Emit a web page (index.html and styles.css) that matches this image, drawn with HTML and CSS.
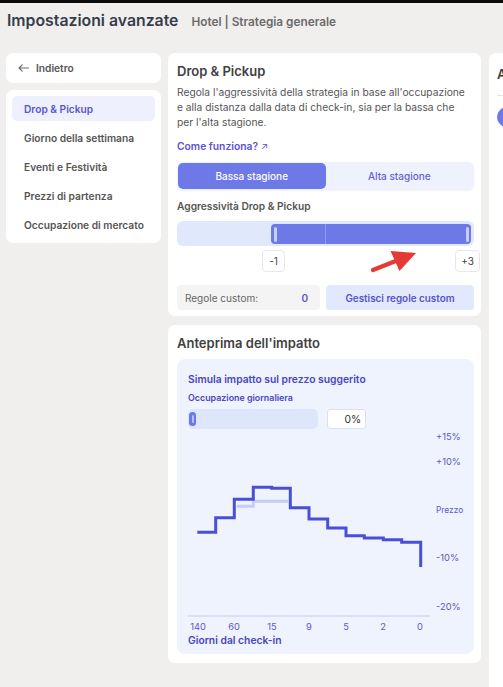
FILE: index.html
```html
<!DOCTYPE html>
<html lang="it">
<head>
<meta charset="utf-8">
<title>Impostazioni avanzate</title>
<link rel="stylesheet" href="styles.css">
</head>
<body>
<div class="topbar"></div>
<header class="page-header">
  <h1 class="page-title">Impostazioni avanzate</h1>
  <span class="page-sub">Hotel | Strategia generale</span>
</header>
<div class="layout">
  <aside class="side">
    <a class="card back">
      <svg class="back-icon" width="11" height="8" viewBox="0 0 11 8"><path d="M10.5 4H1M4.2 0.8L1 4l3.2 3.2" fill="none" stroke="#6b6b6b" stroke-width="1.1" stroke-linecap="round" stroke-linejoin="round"/></svg>
      <span>Indietro</span>
    </a>
    <nav class="card menu">
      <a class="menu-item active">Drop &amp; Pickup</a>
      <a class="menu-item">Giorno della settimana</a>
      <a class="menu-item">Eventi e Festività</a>
      <a class="menu-item">Prezzi di partenza</a>
      <a class="menu-item">Occupazione di mercato</a>
    </nav>
  </aside>

  <main class="main">
    <section class="card strategy">
      <h2 class="card-title">Drop &amp; Pickup</h2>
      <p class="desc">Regola l'aggressività della strategia in base all'occupazione e alla distanza dalla data di check-in, sia per la bassa che per l'alta stagione.</p>
      <a class="how">Come funziona? <span class="how-arrow">↗</span></a>
      <div class="seg">
        <button class="seg-btn active">Bassa stagione</button>
        <button class="seg-btn">Alta stagione</button>
      </div>
      <div class="field-label">Aggressività Drop &amp; Pickup</div>
      <div class="range">
        <div class="range-fill" style="margin-left:31.4%">
          <span class="handle"></span>
          <span class="tick" style="margin-left:48px"></span>
          <span class="handle handle-end"></span>
        </div>
      </div>
      <div class="range-values">
        <span class="val-box val-min">-1</span>
        <span class="val-box val-max">+3</span>
      </div>
      <div class="custom-row">
        <div class="custom-count"><span>Regole custom:</span><span class="count-num">0</span></div>
        <button class="manage-btn">Gestisci regole custom</button>
      </div>
      <svg class="red-arrow" width="52" height="28" viewBox="0 0 52 28">
        <path d="M5 22 L29 12.5" stroke="#e53935" stroke-width="4.4" stroke-linecap="round"/>
        <path d="M48 5 L22.5 3 L31.5 23 Z" fill="#e53935"/>
      </svg>
    </section>

    <section class="card impact">
      <h2 class="card-title">Anteprima dell'impatto</h2>
      <div class="sim">
        <div class="sim-title">Simula impatto sul prezzo suggerito</div>
        <div class="occ-label">Occupazione giornaliera</div>
        <div class="occ-row">
          <div class="occ-track"><span class="occ-thumb"><span class="occ-thumb-in"></span></span></div>
          <div class="occ-input">0%</div>
        </div>
        <svg class="chart" width="286" height="202" viewBox="0 0 286 202">
          <g class="ylab">
            <text x="248" y="9">+15%</text>
            <text x="248" y="34">+10%</text>
            <text x="248" y="82" class="prezzo">Prezzo</text>
            <text x="248" y="130">-10%</text>
            <text x="248" y="179">-20%</text>
          </g>
          <polyline points="48.7,75.3 65.3,75.3 65.3,70.3 100.3,70.3" fill="none" stroke="#c6cef6" stroke-width="3"/>
          <polyline points="9.3,101.3 27.7,101.3 27.7,86.7 46.3,86.7 46.3,68.3 65.3,68.3 65.3,56.3 83.7,56.3 83.7,57.3 102.3,57.3 102.3,76.7 121,76.7 121,88 139.7,88 139.7,97 158,97 158,104.7 176.3,104.7 176.3,107 195.3,107 195.3,108.7 213.7,108.7 213.7,111.3 232.7,111.3 232.7,136" fill="none" stroke="#4b4fd6" stroke-width="3"/>
          <line x1="0" y1="185" x2="242" y2="185" stroke="#c4ccf0" stroke-width="1"/>
          <g class="xlab">
            <text x="10" y="199">140</text>
            <text x="46" y="199">60</text>
            <text x="84" y="199">15</text>
            <text x="121" y="199">9</text>
            <text x="158" y="199">5</text>
            <text x="195" y="199">2</text>
            <text x="232" y="199">0</text>
          </g>
        </svg>
        <div class="axis-title">Giorni dal check-in</div>
      </div>
    </section>
  </main>

  <aside class="card extra">
    <h2 class="card-title extra-title">A</h2>
    <div class="extra-rule"></div>
    <span class="extra-dot"></span>
  </aside>
</div>
</body>
</html>
```

FILE: styles.css
```css
* { box-sizing: border-box; margin: 0; padding: 0; }
html, body { width: 503px; height: 687px; overflow: hidden; }
body {
  background: #f0efed;
  font-family: Inter, "Noto Sans", sans-serif;
  color: #555;
}
button { font-family: inherit; border: 0; cursor: pointer; }
a { text-decoration: none; cursor: pointer; }

.topbar { height: 3px; background: #0b0b0b; }

.page-header {
  height: 50px;
  padding: 8px 7px 0;
  display: flex;
  align-items: baseline;
  gap: 13px;
}
.page-title { font-size: 15.8px; line-height: 20px; font-weight: 600; color: #363d4a; }
.page-sub { font-size: 11.8px; font-weight: 600; color: #6b6b6b; }

.layout {
  display: grid;
  grid-template-columns: 155px 313px 220px;
  column-gap: 7px;
  padding-left: 6px;
  align-items: start;
}

.card { background: #fff; border-radius: 7px; }

/* sidebar */
.side { display: flex; flex-direction: column; gap: 7px; }
.back {
  height: 30px;
  display: flex;
  align-items: center;
  gap: 7px;
  padding-left: 12px;
  font-size: 10.2px;
  font-weight: 600;
  color: #555;
}
.back-icon { display: block; }
.menu { padding: 6px; display: flex; flex-direction: column; gap: 4px; }
.menu-item {
  height: 25px;
  display: flex;
  align-items: center;
  padding-left: 12px;
  border-radius: 5px;
  font-size: 10.2px;
  font-weight: 600;
  color: #555;
}
.menu-item.active { background: #eef1fd; color: #5a55d6; }

/* main */
.main { display: flex; flex-direction: column; gap: 9px; }
.card-title { font-size: 13px; line-height: 18px; font-weight: 600; color: #3f3f3f; }

.strategy { position: relative; padding: 9px 7px 6px 9px; }
.desc { margin-top: 5px; max-width: 292px; font-size: 10.25px; line-height: 15px; color: #555; }
.how { display: block; margin-top: 9px; font-size: 10.3px; line-height: 15px; font-weight: 600; color: #5a55d6; }
.how-arrow { font-weight: 400; font-size: 9.5px; }

.seg {
  margin-top: 8px;
  height: 28px;
  display: flex;
  padding: 1px;
  background: #eef2fd;
  border-radius: 6px;
  box-shadow: 0 1px 2px rgba(60, 70, 120, 0.08);
}
.seg-btn {
  flex: 1;
  border-radius: 5px;
  background: transparent;
  font-size: 10px;
  font-weight: 500;
  color: #6a5fd8;
}
.seg-btn.active { background: #6e79e8; color: #fff; }

.field-label { margin-top: 9px; font-size: 10.2px; line-height: 14px; font-weight: 600; color: #555; }

.range {
  margin-top: 8px;
  height: 25px;
  padding: 3px 3px 2px;
  display: flex;
  background: #e0e8fb;
  border-radius: 6px;
}
.range-fill {
  flex: 1;
  display: flex;
  align-items: center;
  background: #6c79e6;
  border-radius: 4px;
}
.handle { width: 3px; height: 15px; margin-left: 3px; border-radius: 2px; background: #c6cdf7; }
.handle-end { margin-left: auto; margin-right: 2px; }
.tick { width: 1px; height: 20px; background: #909aee; }

.range-values { margin-top: 4px; height: 22px; display: flex; }
.val-box {
  height: 22px;
  min-width: 23px;
  padding: 0 5px;
  display: flex;
  align-items: center;
  justify-content: center;
  background: #fff;
  border: 1px solid #e6e8ec;
  border-radius: 4px;
  font-size: 10px;
  color: #444;
}
.val-min { margin-left: 85px; }
.val-max { margin-left: auto; margin-right: -6px; min-width: 25px; }

.custom-row { margin-top: 13px; height: 25px; display: flex; gap: 6px; }
.custom-count {
  width: 143px;
  display: flex;
  align-items: center;
  justify-content: space-between;
  padding: 0 12px 0 8px;
  background: #f4f4f4;
  border-radius: 4px;
  font-size: 10px;
  color: #666;
}
.count-num { color: #5a55d6; font-weight: 600; }
.manage-btn {
  flex: 1;
  background: #e2e9fc;
  border-radius: 4px;
  font-size: 9.9px;
  font-weight: 600;
  color: #5753c9;
}

.red-arrow { position: absolute; left: 200px; top: 195px; pointer-events: none; }

/* impact */
.impact { padding: 9px 7px 9px 9px; }
.sim {
  margin-top: 7px;
  height: 295px;
  padding: 13px 0 0 11px;
  background: #eef3fe;
  border-radius: 8px;
}
.sim-title { font-size: 10.3px; line-height: 14px; font-weight: 600; color: #4b45bd; }
.occ-label { margin-top: 6px; font-size: 8.9px; line-height: 12px; font-weight: 600; color: #4b45bd; }
.occ-row { margin-top: 5px; height: 20px; display: flex; gap: 9px; }
.occ-track {
  width: 130px;
  padding: 3px 0 3px 1px;
  display: flex;
  background: #dde6fb;
  border-radius: 5px;
}
.occ-thumb {
  width: 7px;
  height: 14px;
  display: flex;
  align-items: center;
  justify-content: center;
  background: #6b78e5;
  border-radius: 4px;
}
.occ-thumb-in { width: 2px; height: 8px; border-radius: 1px; background: #b9c0f5; }
.occ-input {
  width: 39px;
  display: flex;
  align-items: center;
  justify-content: flex-end;
  padding-right: 4px;
  background: #fff;
  border: 1px solid #dde2ea;
  border-radius: 3px;
  font-size: 10.3px;
  color: #333;
}
.chart { display: block; margin-top: 2px; overflow: visible; }
.chart text { font-family: Inter, "Noto Sans", sans-serif; font-size: 9.3px; fill: #5d58c4; }
.xlab text { text-anchor: middle; }
.chart .prezzo { font-size: 8.4px; }
.axis-title { font-size: 10.3px; line-height: 14px; font-weight: 600; color: #4b45bd; }

/* third column (cut off at the window edge) */
.extra { margin-left: 1px; min-height: 700px; padding: 12px 8px; }
.extra-rule { margin-top: 12px; height: 1px; background: #e5e5e5; }
.extra-dot { display: block; margin-top: 11px; width: 20px; height: 20px; border-radius: 50%; background: #6e79e8; }
```
